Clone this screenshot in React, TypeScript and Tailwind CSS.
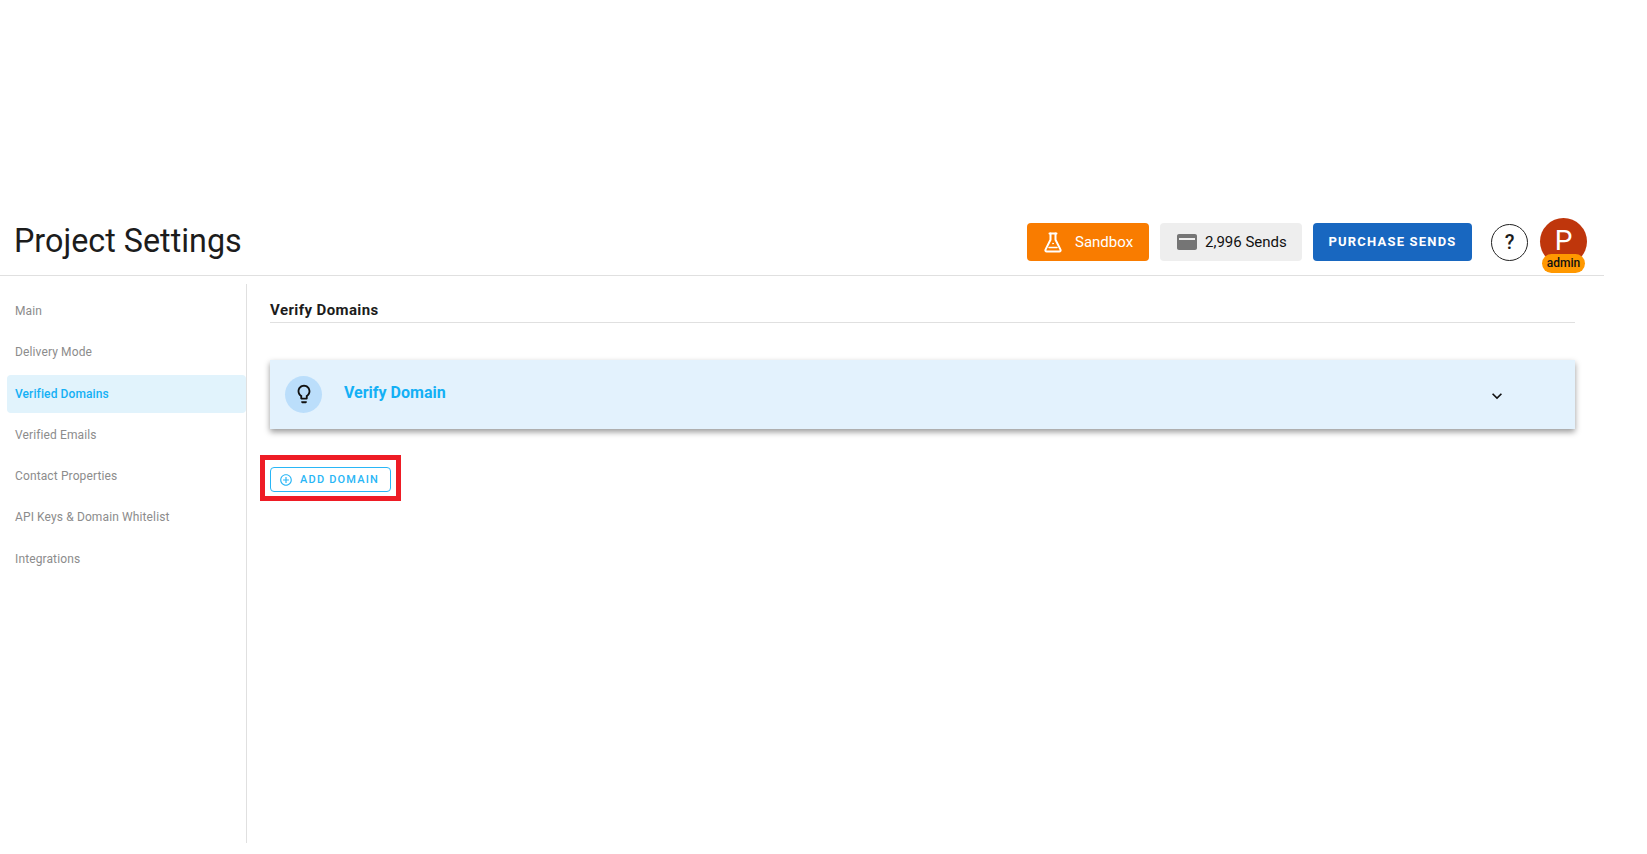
import React from 'react';

const navItems = [
  'Main',
  'Delivery Mode',
  'Verified Domains',
  'Verified Emails',
  'Contact Properties',
  'API Keys & Domain Whitelist',
  'Integrations',
];

function MuiIcon({ d, className }: { d: string; className: string }) {
  return (
    <svg viewBox="0 0 24 24" fill="currentColor" fillRule="evenodd" className={className}>
      <path d={d} />
    </svg>
  );
}

function FlaskIcon() {
  return (
    <svg viewBox="0 0 18 21" fill="none" stroke="currentColor" strokeWidth="2" strokeLinecap="round" strokeLinejoin="round" className="h-[21px] w-[18px]">
      <path d="M5.5 1.5h7" />
      <path d="M6.5 1.5v6.3L1.5 17.6a1.3 1.3 0 0 0 1.2 1.9h12.6a1.3 1.3 0 0 0 1.2-1.9L11.5 7.8V1.5" />
      <path d="M5 15.5h8" strokeWidth="1.5" />
      <circle cx="9" cy="11.5" r="0.5" strokeWidth="1" />
    </svg>
  );
}

const card =
  'M20 4H4c-1.11 0-1.99.89-1.99 2L2 18c0 1.11.89 2 2 2h16c1.11 0 2-.89 2-2V6c0-1.11-.89-2-2-2zM4 8h16v2H4V8z';
const bulb =
  'M9 21c0 .55.45 1 1 1h4c.55 0 1-.45 1-1v-1H9v1zm3-19C8.14 2 5 5.14 5 9c0 2.38 1.19 4.47 3 5.74V17c0 .55.45 1 1 1h6c.55 0 1-.45 1-1v-2.26c1.81-1.27 3-3.36 3-5.74 0-3.86-3.14-7-7-7zm2.85 11.1l-.85.6V16h-4v-2.3l-.85-.6C7.8 12.16 7 10.63 7 9c0-2.76 2.24-5 5-5s5 2.24 5 5c0 1.63-.8 3.16-2.15 4.1z';
const chevron = 'M16.59 8.59L12 13.17 7.41 8.59 6 10l6 6 6-6z';
const plusCircle =
  'M13 7h-2v4H7v2h4v4h2v-4h4v-2h-4V7zm-1-5C6.48 2 2 6.48 2 12s4.48 10 10 10 10-4.48 10-10S17.52 2 12 2zm0 18c-4.41 0-8-3.59-8-8s3.59-8 8-8 8 3.59 8 8-3.59 8-8 8z';

export default function App() {
  return (
    <div className="min-h-screen w-[1604px] bg-white pt-[218px] font-['Roboto',sans-serif] text-[#1c1c1c]">
      <header className="flex h-[58px] items-center border-b border-[#e0e0e0] pb-[9px] pl-[14px]">
        <h1 className="mb-[2px] text-[32.3px] leading-10 font-normal">Project Settings</h1>
        <div className="ml-auto flex items-center">
          <div className="flex h-[38px] w-[122px] items-center rounded-[4px] bg-[#f97c00] pl-[17px] text-[15px] text-white">
            <FlaskIcon />
            <span className="ml-[13px]">Sandbox</span>
          </div>
          <div className="ml-[11px] flex h-[38px] w-[142px] items-center rounded-[4px] bg-[#eeeeee] pl-[15px] text-[15px] text-[#111]">
            <MuiIcon d={card} className="h-6 w-6 text-[#757575]" />
            <span className="ml-[6px]">2,996 Sends</span>
          </div>
          <button className="ml-[11px] h-[38px] w-[159px] rounded-[4px] bg-[#1867c0] text-[13px] font-bold tracking-[1.2px] text-white">
            PURCHASE SENDS
          </button>
          <div className="ml-[19px] flex h-[37px] w-[37px] items-center justify-center rounded-full border border-[#222] text-[20px] font-medium">
            ?
          </div>
          <div className="relative mb-[2px] ml-[12px] mr-[17px] flex h-[47px] w-[47px] items-center justify-center rounded-full bg-[#bf360c] text-[28px] text-white">
            P
            <span className="absolute bottom-[-8px] left-[2px] flex h-[19px] w-[43px] items-center justify-center rounded-full bg-[#ff9800] text-[12px] font-medium text-[#111]">
              admin
            </span>
          </div>
        </div>
      </header>

      <div className="flex h-[567px]">
        <nav className="mt-[8px] flex w-[247px] flex-col border-r border-[#e0e0e0] pl-[7px] pt-[8px]">
          {navItems.map((item) => (
            <div
              key={item}
              className={
                item === 'Verified Domains'
                  ? 'mb-[3.3px] flex h-[38px] items-center rounded-[4px] bg-[#e1f3fc] pl-[8px] text-[12px] font-medium tracking-[0.1px] text-[#14b0f5]'
                  : 'mb-[3.3px] flex h-[38px] items-center pl-[8px] text-[12px] font-normal tracking-[0.12px] text-[#8c8c8c]'
              }
            >
              {item}
            </div>
          ))}
        </nav>

        <main className="w-[1328px] pl-[23px] pt-[22px]">
          <h2 className="border-b border-[#e0e0e0] text-[15px] leading-6 font-bold tracking-[0.4px]">
            Verify Domains
          </h2>
          <div className="mt-[37px] flex h-[69px] items-center bg-[#e3f2fd] pl-[15px] pr-[68px] shadow-[0_3px_6px_rgba(0,0,0,0.4)]">
            <div className="flex h-[37px] w-[37px] items-center justify-center rounded-full bg-[#bbdefb]">
              <MuiIcon d={bulb} className="mb-[1px] h-[22px] w-[22px] text-[#111]" />
            </div>
            <span className="mb-[4px] ml-[22px] text-[16px] font-bold text-[#14b0f5]">Verify Domain</span>
            <MuiIcon d={chevron} className="ml-auto mt-[3px] h-5 w-5 text-[#111]" />
          </div>
          <div className="-ml-[10px] mt-[26px] w-fit border-[5px] border-[#ee1c25] pb-[4px] pl-[5px] pr-[5px] pt-[7px]">
            <button className="flex h-[25px] w-[121px] items-center rounded-[4px] border border-[#29b6f6] pl-[8px] text-[11px] font-medium tracking-[1.2px] text-[#29b6f6]">
              <MuiIcon d={plusCircle} className="h-[14px] w-[14px]" />
              <span className="ml-[7px] mt-[1px]">ADD DOMAIN</span>
            </button>
          </div>
        </main>
      </div>
    </div>
  );
}
